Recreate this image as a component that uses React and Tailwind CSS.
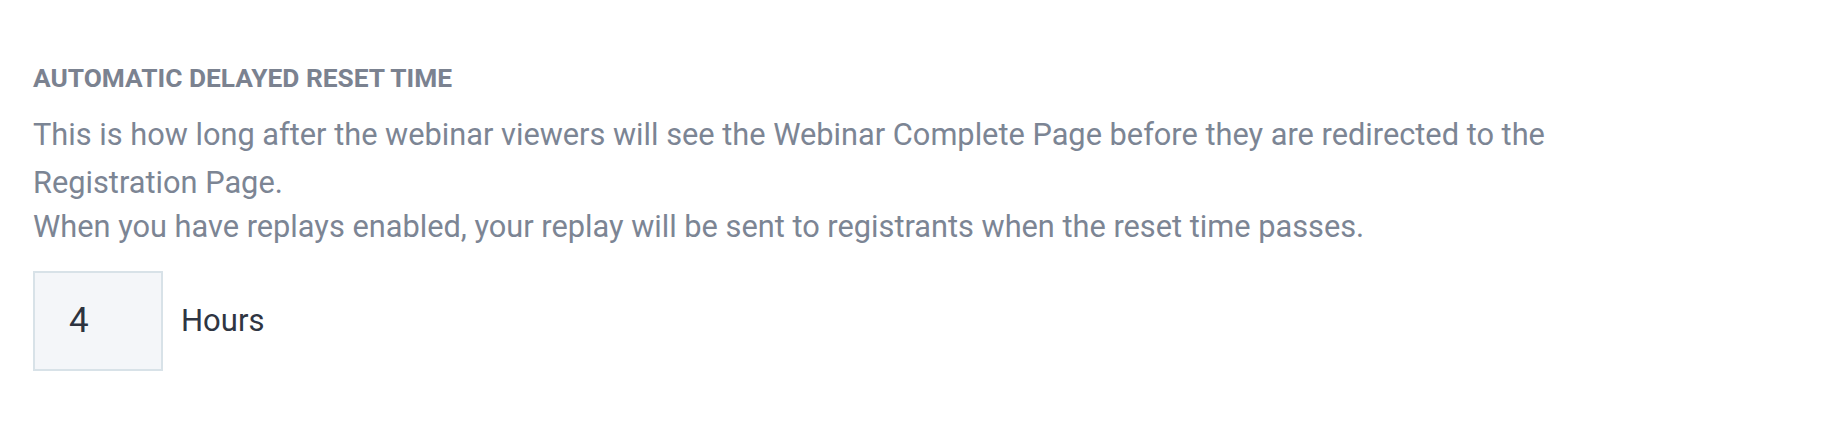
import React from "react";

export default function App() {
  return (
    <div className="w-[1842px] h-[425px] bg-white" style={{ fontFamily: "Roboto, 'Open Sans', sans-serif" }}>
      <div className="pl-[33px] pt-[63px]">
        <h3 className="text-[26.3px] leading-[30px] font-bold text-[#7b8290] uppercase">
          Automatic Delayed Reset Time
        </h3>
        <div className="mt-[18px] text-[30.75px] text-[#7c8594] max-w-[1600px]">
          <p className="leading-[48px]">
            This is how long after the webinar viewers will see the Webinar Complete Page before they are redirected to the
            <br />
            Registration Page.
          </p>
          <p className="leading-[40px]">When you have replays enabled, your replay will be sent to registrants when the reset time passes.</p>
        </div>
        <div className="mt-[24px] flex items-center gap-[18px]">
          <div className="w-[130px] h-[100px] border-2 border-[#d8e2e8] bg-[#f4f6f9] flex items-center pl-[34px] text-[35px] text-[#2d3340]">
            4
          </div>
          <span className="text-[31px] text-[#2f3542]">Hours</span>
        </div>
      </div>
    </div>
  );
}
